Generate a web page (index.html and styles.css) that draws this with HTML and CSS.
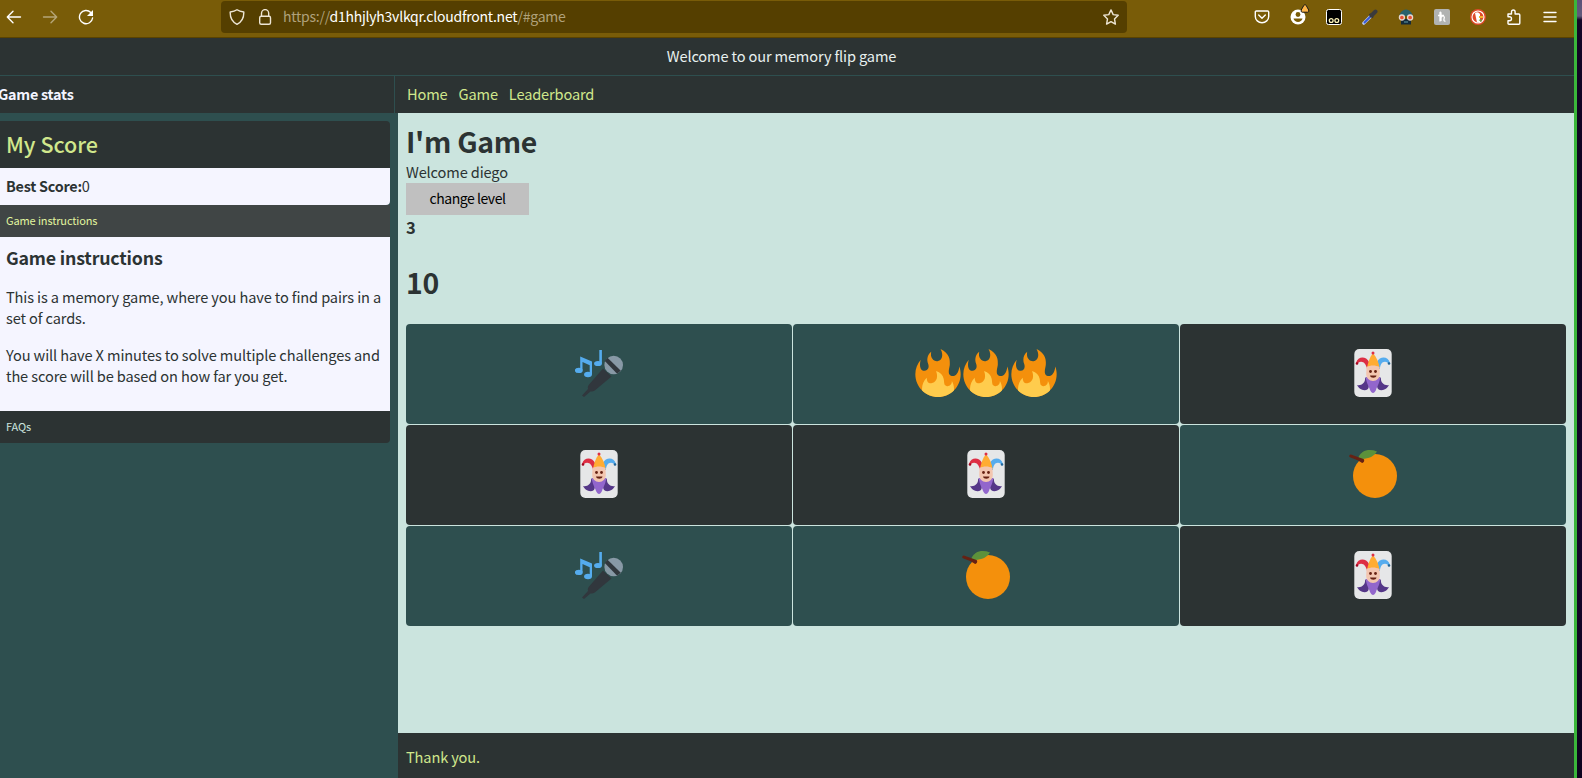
FILE: index.html
```html
<!DOCTYPE html>
<html lang="en">
<head>
<meta charset="utf-8">
<title>Memory flip game</title>
<link rel="stylesheet" href="styles.css">
</head>
<body>
<svg class="defs" width="0" height="0">
  <symbol id="fire" viewBox="0 0 36 36">
    <path fill="#F4900C" d="M35 19c0-2.062-.367-4.039-1.04-5.868-.46 5.389-3.333 8.157-6.335 6.868-2.812-1.208-.917-5.917-.777-8.164.236-3.809-.012-8.169-6.931-11.794 2.875 5.5.333 8.917-2.333 9.125-2.958.231-5.667-2.542-4.667-7.042-3.238 2.386-3.332 6.402-2.333 9 1.042 2.708-.042 4.958-2.583 5.208-2.84.28-4.418-3.041-2.963-8.333C2.52 10.965 1 14.805 1 19c0 9.389 7.611 17 17 17s17-7.611 17-17z"/>
    <path fill="#FFCC4D" d="M28.394 23.999c.148 3.084-2.561 4.293-4.019 3.709-2.106-.843-1.541-2.291-2.083-5.291s-2.625-5.083-5.708-6c2.25 6.333-1.247 8.667-3.08 9.084-1.872.426-3.753-.001-3.968-4.007C7.352 23.668 6 26.676 6 30c0 .368.023.73.055 1.09C9.125 34.124 13.342 36 18 36s8.875-1.876 11.945-4.91c.032-.36.055-.722.055-1.09 0-2.187-.584-4.236-1.606-6.001z"/>
  </symbol>
  <symbol id="orange" viewBox="0 0 48 48">
    <circle cx="26" cy="26" r="22" fill="#F4900C"/>
    <path fill="#5C913B" d="M9 8.500C12 0 20-1.500 28 1.500 25 7 17 10 9 8.500z"/>
    <path fill="#662113" d="M.5 5.200c.5-.7 1.200-.7 2-.4l12 4.200c1.200.7.8 2.500-.3 3.500-.6.700-1.500.600-2.200-.2C8 9.500 4 9 1 7.300c-.8-.6-1-1.300-.5-2.100z"/>
  </symbol>
  <symbol id="joker" viewBox="0 0 48 48">
    <rect x="5.300" width="37.400" height="48" rx="5" fill="#E6E7E8"/>
    <path fill="#DD2E44" d="M7 14c2-7 10-7 13-1v7h-2c-1-6-5-9-9-6z"/>
    <path fill="#55ACEE" d="M41 14c-2-7-10-7-13-1v7h3c0-6 4-9 8-6z"/>
    <path fill="#FFAC33" d="M18 19c1-5 2-10 6-15 4 5 6 10 6.500 15z"/>
    <path fill="#553788" d="M16 28c3.500 4 5 9 3 12-4 3-9 0-11-4 4 1 9-2 8-8z"/>
    <path fill="#553788" d="M32 28c-3.500 4-5 9-3 12 4 3 9 0 11-4-4 1-9-2-8-8z"/>
    <path fill="#9266CC" d="M17 28h14c0 6-3 9-4 13-1 2-2 3-3 3s-2-1-3-3c-1-4-4-7-4-13z"/>
    <path fill="#F3C6B0" d="M17.500 18c4-2 9-2 13 0l.3 7c0 4-3 7-6.800 7s-6.800-3-6.800-7z"/>
    <circle cx="24" cy="4" r="1.500" fill="#DD2E44"/>
    <circle cx="8" cy="14.500" r="1.300" fill="#A0041E"/>
    <circle cx="40" cy="14.500" r="1.300" fill="#226699"/>
    <circle cx="21.500" cy="22.500" r="1.400" fill="#662113"/>
    <circle cx="26.500" cy="22.500" r="1.400" fill="#662113"/>
    <path fill="#662113" d="M21 26.500h6.500c-.4 3-6 3-6.500 0z"/>
  </symbol>
  <symbol id="mic" viewBox="0 -1 48 48">
    <path fill="#31373D" d="M28 18.500l8.500 8L21 39.500c-1.500 1.600-3 2-5.500 2L9 47l-2-1.500 6-6.500c-.5-2 0-3.500 1.500-5z"/>
    <circle cx="38.700" cy="15" r="9.300" fill="#8899A6"/>
    <path fill="#31373D" d="M32.500 7.700l13.300 13-3.700 3-12.300-12.700z"/>
    <g fill="#55ACEE">
      <ellipse cx="3.800" cy="20.400" rx="3.900" ry="2.700"/>
      <ellipse cx="13" cy="24.500" rx="3.900" ry="2.700"/>
      <path d="M5.200 6.500L17 11.500v13h-2.300v-9.300l-7.200-3.200v8.400H5.200z"/>
      <ellipse cx="23" cy="13.500" rx="3.900" ry="2.600"/>
      <path d="M24.300 0h2.600v13.500h-2.600z"/>
    </g>
  </symbol>
</svg>
<div class="window">
  <div class="toolbar">
    <div class="nav-buttons">
      <svg width="16" height="16" viewBox="0 0 16 16" class="line"><path d="M14.500 8H1.500M7 2.300L1.300 8 7 13.700"/></svg>
      <svg width="16" height="16" viewBox="0 0 16 16" class="line dim"><path d="M1.500 8h13M9 2.300L14.700 8 9 13.700"/></svg>
      <svg width="16" height="16" viewBox="0 0 16 16" class="line"><path d="M12.800 3.500A6.600 6.600 0 1 0 14.600 9"/><path d="M15 1v6H9z" fill="#fff" stroke="none"/></svg>
    </div>
    <div class="urlbar">
      <svg width="16" height="16" viewBox="0 0 16 16" class="line soft"><path d="M8 .8C10 2.300 12.500 2.800 14.800 3c.2 5.500-1.800 9.800-6.800 12.300C3 12.800 1 8.500 1.200 3 3.500 2.800 6 2.300 8 .8z"/></svg>
      <svg width="16" height="16" viewBox="0 0 16 16" class="line soft"><rect x="2.700" y="7.300" width="10.800" height="8" rx="1.500"/><path d="M4.500 7.300V4.200a3.600 3.600 0 0 1 7.200 0v3.100"/></svg>
      <span class="url">https://<b>d1hhjlyh3vlkqr.cloudfront.net</b>/#game</span>
      <svg width="16" height="16" viewBox="0 0 16 16" class="line soft"><path d="M8 .9l2.200 4.700 5 .7-3.700 3.600.9 5.200L8 12.600l-4.400 2.500.9-5.200L.8 6.300l5-.7z"/></svg>
    </div>
    <div class="extensions">
      <svg width="16" height="16" viewBox="0 0 16 16" class="line"><path d="M2.300 2h11.400q1 0 1 1v4.500a6.700 6.200 0 0 1-13.400 0V3q0-1 1-1z"/><path d="M4.700 6L8 9.200 11.300 6"/></svg>
      <svg width="16" height="16" viewBox="0 0 16 16" class="over"><circle cx="8" cy="8" r="7.500" fill="#fff"/><circle cx="8" cy="5.500" r="2.400" fill="#795c08"/><path d="M3.500 9.500h9c-1 4.500-8 4.500-9 0z" fill="#795c08"/><path d="M15-4.300q.8 0 1.200.8L18.700 1q.5 2-1 2.200h-5.500q-1.500-.2-1-2.200l2.600-4.500q.4-.8 1.200-.8z" fill="#ffb548" stroke="#171717" stroke-width="1"/></svg>
      <svg width="16" height="16" viewBox="0 0 16 16"><rect x=".5" y=".5" width="15" height="15" rx="2" stroke="#fff"/><g fill="#000" stroke="#fff5b8" stroke-width="1.300"><circle cx="5.200" cy="11.500" r="1.900"/><circle cx="10.800" cy="11.500" r="1.900"/></g></svg>
      <svg width="16" height="16" viewBox="0 0 16 16"><path d="M1.800 14.200L9 7" stroke="#b5c5ee" stroke-width="3.200" stroke-linecap="round"/><path d="M2 14l6.500-6.500" stroke="#3557d6" stroke-width="1.800"/><path d="M7.500 5l3.500 3.500" stroke="#333" stroke-width="2"/><path d="M9.500 6.500l4-4" stroke="#3a3a3c" stroke-width="4" stroke-linecap="round"/></svg>
      <svg width="16" height="16" viewBox="0 0 16 16"><path d="M1 7C2 4 4 1 8 .5c4 .5 6 3.500 7 6.500z" fill="#28616c"/><path d="M3 10h10v5.500H3z" fill="#142b3b"/><path d="M6 12h4v2H6z" fill="#3b6471"/><g fill="#e75035" stroke="#e6d8cd" stroke-width="1.300"><circle cx="3.900" cy="8.500" r="2.500"/><circle cx="12.100" cy="8.500" r="2.500"/></g></svg>
      <svg width="16" height="16" viewBox="0 0 16 16"><rect width="16" height="16" rx="2" fill="#b1b3b2"/><path d="M6 12.500V3.500Q7 2.500 7 5v7M7 8.500c2.500-3 4-1 3 1.500-.3 1.500 0 2.500 1.500 2M4 6.500h6" fill="none" stroke="#fff" stroke-width="1.300"/></svg>
      <svg width="16" height="16" viewBox="0 0 16 16"><circle cx="8" cy="8" r="8" fill="#de4a2b"/><circle cx="8" cy="8" r="6" fill="#de4a2b" stroke="#fff" stroke-width="1.100"/><path d="M5 4q3-2 5 1v8.500H7z" fill="#fff"/><path d="M9 7h4v2H9z" fill="#f5b52c"/><path d="M8.500 11l3-1v3z" fill="#5caf48"/></svg>
      <svg width="16" height="16" viewBox="0 0 16 16" class="line"><path d="M2 5h3.500V2.800a1.800 1.800 0 0 1 3.600 0V5h3.700q1 0 1 1v8.300q0 1-1 1H3q-1 0-1-1v-2.600h1.500a2 2 0 0 0 0-4H2z"/></svg>
      <svg width="16" height="16" viewBox="0 0 16 16" class="line"><path d="M2 3.500h12M2 8h12M2 12.500h12"/></svg>
    </div>
  </div>
  <header class="welcome">Welcome to our memory flip game</header>
  <div class="menu-row">
    <div class="stats-title">Game stats</div>
    <nav class="menu"><a>Home</a><a>Game</a><a>Leaderboard</a></nav>
  </div>
  <div class="content">
    <aside class="sidebar">
      <section class="score">
        <h2>My Score</h2>
        <p><b>Best Score:</b>0</p>
      </section>
      <section class="accordion">
        <div class="tab open">Game instructions</div>
        <div class="panel">
          <h3>Game instructions</h3>
          <p>This is a memory game, where you have to find pairs in a set of cards.</p>
          <p>You will have X minutes to solve multiple challenges and the score will be based on how far you get.</p>
        </div>
        <div class="tab last">FAQs</div>
      </section>
    </aside>
    <div class="page">
      <main class="game">
        <h1>I'm Game</h1>
        <p class="user">Welcome diego</p>
        <button class="level">change level</button>
        <h3 class="lives">3</h3>
        <h1 class="timer">10</h1>
        <div class="board">
          <div class="card"><svg><use href="#mic"/></svg></div>
          <div class="card"><svg><use href="#fire"/></svg><svg><use href="#fire"/></svg><svg><use href="#fire"/></svg></div>
          <div class="card dark"><svg><use href="#joker"/></svg></div>
          <div class="card dark"><svg><use href="#joker"/></svg></div>
          <div class="card dark"><svg><use href="#joker"/></svg></div>
          <div class="card"><svg><use href="#orange"/></svg></div>
          <div class="card"><svg><use href="#mic"/></svg></div>
          <div class="card"><svg><use href="#orange"/></svg></div>
          <div class="card dark"><svg><use href="#joker"/></svg></div>
        </div>
      </main>
      <footer class="footer">Thank you.</footer>
    </div>
  </div>
</div>
</body>
</html>
```
FILE: styles.css
```css
* { box-sizing: border-box; }
body {
  margin: 0;
  height: 778px;
  overflow: hidden;
  background: linear-gradient(#5b5078 0, #625b7b 16px, #130526 20px, #0d0420 300px, #18072e 500px, #0d031e);
  color: #2c3333;
  font: 14.6px/21px "Noto Sans CJK SC", "Noto Sans", sans-serif;
  letter-spacing: -.14px;
}
h1, h2, h3, p { margin: 0; }
h1, h2, h3, b { font-weight: 700; }
.defs { position: absolute; }
.window {
  display: flex;
  flex-direction: column;
  width: 1577px;
  height: 778px;
  border-right: 3px solid #3bb63b;
  background: #2e4f4f;
}
.toolbar {
  display: flex;
  flex: none;
  height: 38px;
  padding: 1px 16px 4px 6px;
  border-bottom: 1px solid #5b4300;
  background: #795c08;
}
.toolbar svg { flex: none; }
.line { fill: none; stroke: #fff; stroke-width: 1.4; stroke-linecap: round; stroke-linejoin: round; }
.soft { stroke: #eee6d5; }
.dim { opacity: .45; }
.over { overflow: visible; }
.nav-buttons { display: flex; align-items: center; gap: 20px; width: 215px; }
.urlbar {
  display: flex;
  align-items: center;
  width: 906px;
  height: 32px;
  padding: 0 8px;
  gap: 12px;
  border-radius: 4px;
  background: #553f00;
}
.url { flex: 1; margin-left: -2px; padding-bottom: 1px; font-size: 14px; letter-spacing: -.24px; color: #b0a17b; white-space: nowrap; }
.url b { font-weight: 400; color: #fff; }
.extensions { display: flex; align-items: center; justify-content: flex-end; gap: 20px; flex: 1; }
.welcome {
  flex: none;
  height: 38px;
  padding: 7px 11px 0 0;
  border-bottom: 1px solid #2e4f4f;
  background: #2c3333;
  color: #e7f0ef;
  text-align: center;
}
.menu-row { display: flex; flex: none; height: 37px; background: #2c3333; }
.stats-title {
  width: 395px;
  padding-top: 7px;
  border-right: 1px solid #2e4f4f;
  color: #f3f4ff;
  font-weight: 700;
  font-size: 14.4px;
  letter-spacing: -.25px;
  text-indent: -2px;
}
.menu { display: flex; gap: 11px; padding: 7px 12px; color: #d0e78c; }
.content { display: flex; flex: 1; min-height: 0; }
.sidebar { width: 398px; padding: 8px 8px 0 0; }
.score { border-radius: 0 4px 4px 0; overflow: hidden; background: #2c3333; }
.score h2 { height: 47px; padding: 7px 6px; font-size: 21.5px; font-weight: 500; line-height: 31px; letter-spacing: 0; color: #d0e78c; }
.score p { height: 37px; padding: 7px 6px; background: #f5f5ff; }
.score b { font-size: 14.4px; letter-spacing: -.25px; }
.tab { height: 32px; padding: 7px 6px; font-size: 11px; line-height: 16px; letter-spacing: -.12px; background: #2c3333; color: #cbe4de; }
.open { background: #404545; color: #e0f59f; }
.last { border-radius: 0 0 4px 0; }
.panel { height: 174px; padding: 7px 6px; background: #f5f5ff; }
.panel h3 { font-size: 17.8px; line-height: 26px; letter-spacing: -.2px; }
.panel p { margin-top: 16px; letter-spacing: -.12px; }
.page { display: flex; flex-direction: column; flex: 1; }
.game { flex: 1; padding: 7px 8px 8px; background: #cbe4de; }
.game h1 { font-size: 28.4px; line-height: 41px; letter-spacing: -.3px; }
.level {
  display: block;
  width: 123px;
  height: 32px;
  margin-top: 1px;
  padding: 0 0 2px;
  border: 0;
  background: #c0c0c0;
  color: #000;
  font: 14px/20px "Noto Sans CJK SC", sans-serif;
  letter-spacing: -.45px;
}
.game .lives { font-size: 16.5px; line-height: 24px; }
.game .timer { margin: 22px 0 22px; }
.board { display: grid; grid-template-columns: repeat(3, 1fr); grid-auto-rows: 100px; gap: 1px; }
.card { display: flex; align-items: center; justify-content: center; padding-bottom: 2px; border-radius: 4px; background: #2e4f4f; }
.card svg { width: 48px; height: 48px; }
.dark { background: #2c3333; }
.footer { height: 45px; padding: 13px 8px 0; background: #2c3333; color: #d0e78c; }
```
